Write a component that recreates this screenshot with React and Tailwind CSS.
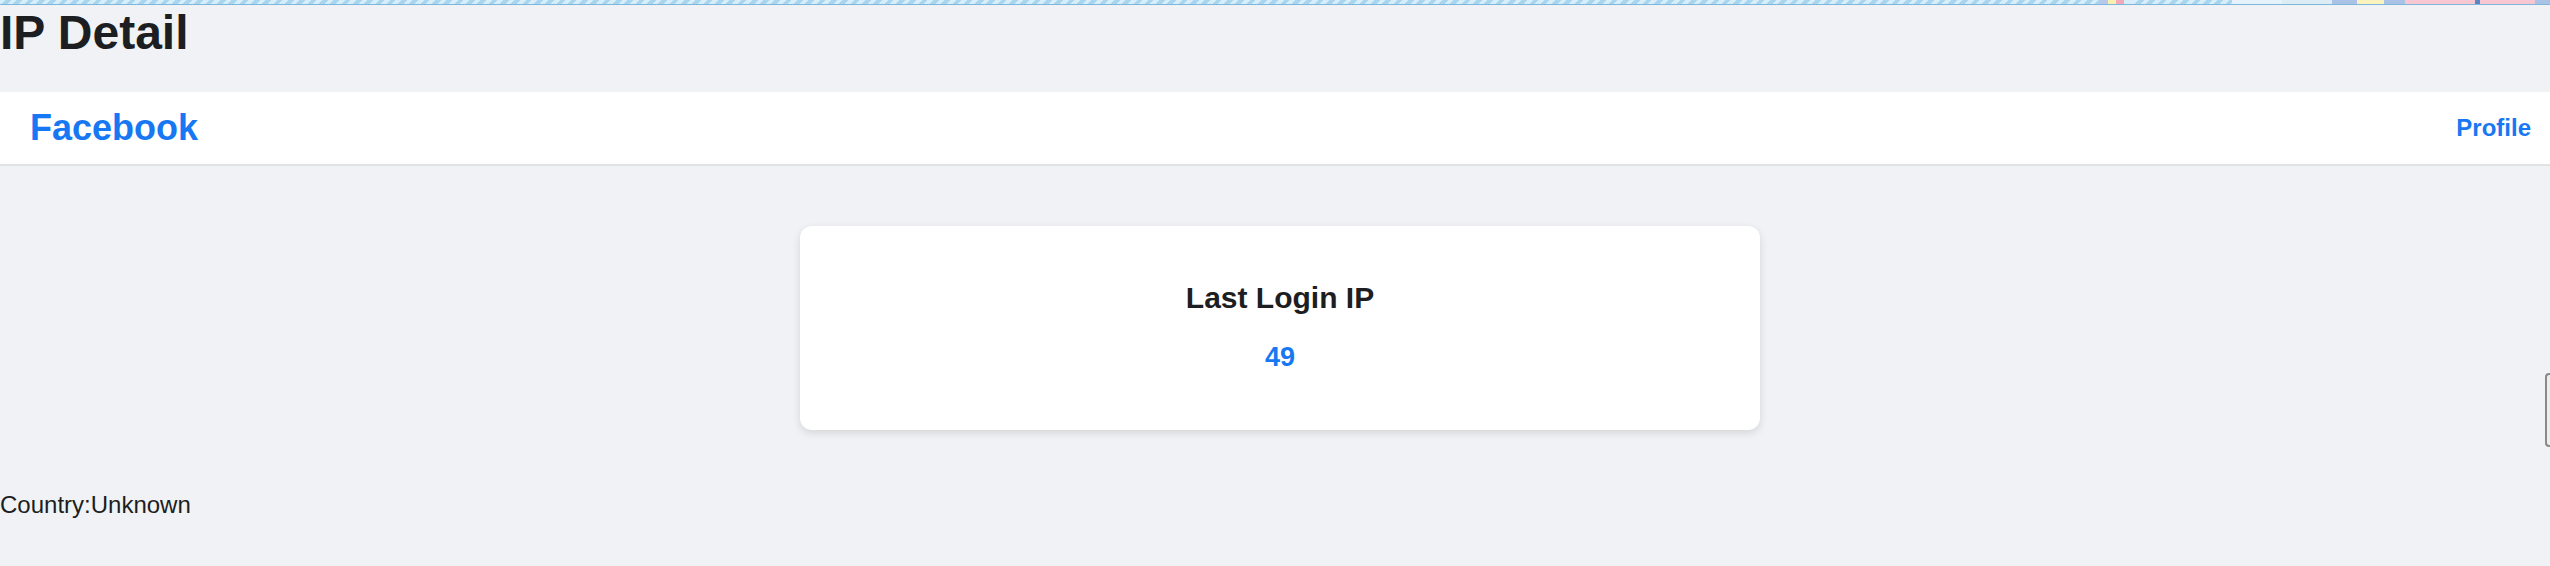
export default function App() {
  return (
    <div className="relative min-h-[566px] bg-[#f0f2f5] text-[#1c1e21] font-['Liberation_Sans',Arial,sans-serif] overflow-hidden">
      {/* top decorative strip */}
      <div className="flex h-[5px] border-b border-[#7db8dc]">
        <div className="flex-1 bg-[repeating-linear-gradient(135deg,#d6eefa_0px,#d6eefa_4px,#a9d5ef_4px,#a9d5ef_8px)]" />
        <div className="w-[232px] flex">
          <div className="w-[33px] flex">
            <div className="w-[8px] bg-[#b8c8ea]" />
            <div className="w-[8px] bg-[#f7f0b0]" />
            <div className="w-[8px] bg-[#f2a9b8]" />
            <div className="w-[9px] bg-[#d6eefa]" />
          </div>
          <div className="flex-1 bg-[repeating-linear-gradient(135deg,#d6eefa_0px,#d6eefa_4px,#a9d5ef_4px,#a9d5ef_8px)]" />
          <div className="w-[50px] bg-[#e6f3fa]" />
          <div className="w-[50px] bg-[#dcecf5]" />
        </div>
        <div className="w-[218px] flex">
          <div className="w-[25px] bg-[#a9c2e6]" />
          <div className="w-[27px] bg-[#fbf3bd]" />
          <div className="w-[21px] bg-[#a9c2e6]" />
          <div className="w-[70px] bg-[#f6c7d3]" />
          <div className="w-[5px] bg-[#5a86c4]" />
          <div className="w-[55px] bg-[#f6c7d3]" />
          <div className="flex-1 bg-[#a9c2e6]" />
        </div>
      </div>

      <h1 className="m-0 mb-[32px] text-[48px] leading-[55px] font-bold">IP Detail</h1>

      <nav className="flex items-center justify-between bg-white pl-[30px] pr-[19px] pt-[15px] pb-[16px] border-b-2 border-[#e0e2e6]">
        <div className="text-[36px] leading-[41px] font-bold text-[#1877f2]">Facebook</div>
        <a className="text-[24px] leading-[28px] font-bold text-[#1877f2]">Profile</a>
      </nav>

      <div className="ml-[800px] mt-[60px] w-[960px] h-[204px] bg-white rounded-[12px] shadow-[0_3px_8px_rgba(0,0,0,0.12)] flex flex-col items-center pt-[55px]">
        <h3 className="m-0 text-[30px] leading-[34px] font-bold text-[#1c1e21]">Last Login IP</h3>
        <p className="m-0 mt-[27px] text-[27px] leading-[31px] font-bold text-[#1877f2]">49</p>
      </div>

      <div className="mt-[61px] text-[24px] leading-[28px] text-[#1c1e21]">Country:Unknown</div>

      <div className="absolute right-0 top-[373px] w-[5px] h-[74px] rounded-l-[4px] border-2 border-r-0 border-[#8a8a8a] bg-[#eeeeee]" />
    </div>
  );
}
